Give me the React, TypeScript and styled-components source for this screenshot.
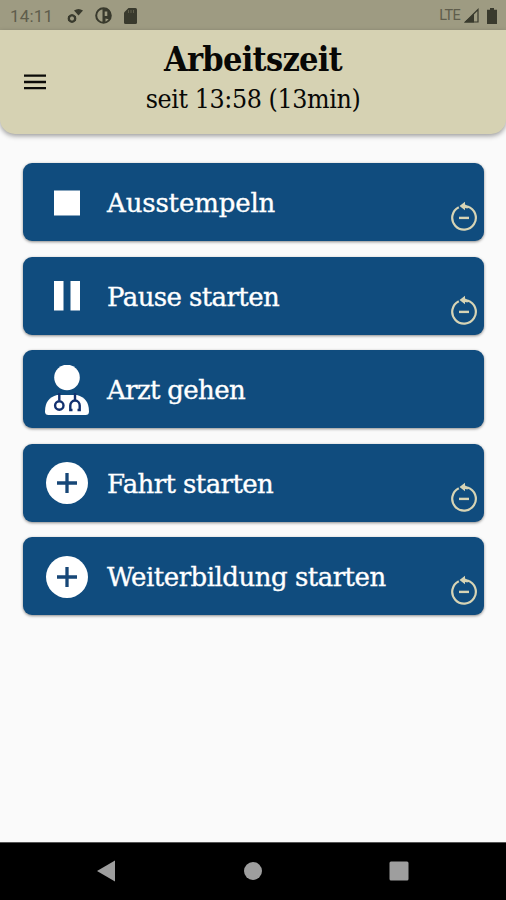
import React from "react";
import styled, { createGlobalStyle } from "styled-components";

const GlobalStyle = createGlobalStyle`
  * { box-sizing: border-box; }
  body { margin: 0; background: #fafafa; }
`;

const Screen = styled.div`
  display: flex;
  flex-direction: column;
  width: 506px;
  height: 900px;
  overflow: hidden;
  background: #fafafa;
`;

const StatusBar = styled.div`
  display: flex;
  align-items: center;
  justify-content: space-between;
  flex: none;
  height: 30px;
  padding: 1px 9px 0 10px;
  background: #9e9b82;
  color: #5f5d4c;
  font-family: Roboto, sans-serif;
`;

const StatusGroup = styled.div<{ $gap: number }>`
  display: flex;
  align-items: center;
  gap: ${(p) => p.$gap}px;
  svg { display: block; }
`;

const Clock = styled.span`
  width: 43px;
  margin-right: 2px;
  font-size: 17px;
  line-height: 20px;
  letter-spacing: 0.2px;
`;

const Network = styled.span`
  font-size: 14.5px;
  line-height: 20px;
  letter-spacing: -0.7px;
`;

const BatteryIcon = styled.svg`
  margin-left: 4px;
`;

const Header = styled.header`
  display: grid;
  grid-template-columns: 70px 1fr 70px;
  flex: none;
  height: 104px;
  border-radius: 0 0 15px 15px;
  background: #d6d2b3;
  box-shadow: 0 2px 5px rgba(0, 0, 0, 0.38);
`;

const MenuButton = styled.button`
  display: flex;
  align-items: center;
  justify-content: center;
  padding: 0;
  border: 0;
  background: none;
`;

const Heading = styled.div`
  display: flex;
  flex-direction: column;
  align-items: center;
  padding-top: 8px;
  color: #080806;
  font-family: "Roboto Slab", "DejaVu Serif Condensed", "DejaVu Serif", serif;
  white-space: nowrap;
`;

const Title = styled.h1`
  margin: 0;
  font-size: 34px;
  line-height: 42px;
  font-weight: 700;
  letter-spacing: -0.75px;
`;

const Subtitle = styled.div`
  font-size: 26.5px;
  line-height: 38px;
  letter-spacing: -0.4px;
`;

const Actions = styled.main`
  display: flex;
  flex: 1;
  flex-direction: column;
  gap: 15.5px;
  padding: 29px 22px 0 23px;
`;

const ActionButton = styled.button`
  display: grid;
  grid-template-columns: 88px 1fr 40px;
  align-items: center;
  flex: none;
  height: 78px;
  padding: 0;
  border: 0;
  border-radius: 9px;
  background: #104c7e;
  box-shadow: 0 1px 3px rgba(0, 0, 0, 0.45);
  color: #fff;
  text-align: left;
`;

const IconSlot = styled.span`
  display: flex;
  justify-content: center;
  padding-top: 1px;
`;

const Label = styled.span<{ $spacing: number }>`
  margin-left: -4px;
  padding-top: 2px;
  font-family: "Roboto Slab", "DejaVu Serif", serif;
  font-size: 26px;
  line-height: 36px;
  letter-spacing: ${(p) => p.$spacing}px;
  -webkit-text-stroke: 0.35px #fff;
  white-space: nowrap;
`;

const UndoSlot = styled.span`
  display: flex;
  align-self: end;
  justify-content: center;
  padding-bottom: 10px;
`;

const NavBar = styled.nav`
  display: grid;
  grid-template-columns: 33px 146px 147px 145px 35px;
  align-items: center;
  justify-items: center;
  flex: none;
  height: 58px;
  padding-bottom: 2px;
  border-top: 1px solid #555;
  background: #000;
  svg { display: block; }
  svg:first-child { grid-column-start: 2; }
`;

const StopIcon = () => (
  <svg width="44" height="50" viewBox="0 0 44 50" fill="#fff"><path d="M9 12.500h26v25H9z" /></svg>
);

const PauseIcon = () => (
  <svg width="44" height="50" viewBox="0 0 44 50" fill="#fff"><path d="M9 10h9.500v29.500H9zM25.500 10H35v29.500h-9.500z" /></svg>
);

const DoctorIcon = () => (
  <svg width="44" height="50" viewBox="0 0 44 50">
    <circle cx="22" cy="12.500" r="12.800" fill="#fff" />
    <path d="M12 30H32Q44 33 44 46.500Q44 50 40.500 50H3.500Q0 50 0 46.500Q0 33 12 30Z" fill="#fff" />
    <g fill="none" stroke="#12306f" strokeWidth="2.400">
      <path d="M14.300 28v7.500M30 28v7" />
      <circle cx="14.300" cy="40.500" r="4.200" />
      <path d="M27.500 45h-2.200v-4.500a4.700 5 0 0 1 9.400 0V45h-2.200" />
    </g>
  </svg>
);

const PlusIcon = () => (
  <svg width="44" height="44" viewBox="0 0 44 44">
    <circle cx="22" cy="22" r="21" fill="#fff" />
    <path d="M22 12v20M12 22h20" stroke="#174777" strokeWidth="3.300" />
  </svg>
);

const UndoIcon = () => (
  <svg width="28" height="30" viewBox="0 0 28 30">
    <g fill="none" stroke="#d7d4b5" strokeWidth="2.200">
      <path d="M8.800 6.200A11.800 11.800 0 1 0 17.500 5.500" />
      <path d="M9 16.900h10" strokeWidth="2.400" />
    </g>
    <path d="M9.500 5 15 .8V3.500L19 5.300 17.500 7.500 15 7V9.300Z" fill="#d7d4b5" />
  </svg>
);

const actions = [
  { label: "Ausstempeln", icon: <StopIcon />, spacing: -0.15, undo: true },
  { label: "Pause starten", icon: <PauseIcon />, spacing: -0.6, undo: true },
  { label: "Arzt gehen", icon: <DoctorIcon />, spacing: -0.65, undo: false },
  { label: "Fahrt starten", icon: <PlusIcon />, spacing: -0.6, undo: true },
  { label: "Weiterbildung starten", icon: <PlusIcon />, spacing: -0.5, undo: true },
];

export default function App() {
  return (
    <Screen>
      <GlobalStyle />
      <StatusBar>
        <StatusGroup $gap={12}>
          <Clock>14:11</Clock>
          <svg width="16" height="16" viewBox="0 0 16 16">
            <circle cx="5" cy="10.500" r="3.200" fill="none" stroke="#393a2d" strokeWidth="2.300" />
            <path d="M5 6v9M1 8.200l8 4.600M9 8.200l-8 4.600" stroke="#393a2d" strokeWidth="1" />
            <circle cx="5" cy="10.500" r="2" fill="#9e9b82" />
            <path d="M7 2.500Q11.500-.5 16 2.500L11.500 7.500Z" fill="#393a2d" />
          </svg>
          <svg width="17" height="17" viewBox="0 0 17 17">
            <circle cx="8.500" cy="8.500" r="7.300" fill="none" stroke="#393a2d" strokeWidth="2" />
            <path d="M7.500 1h3.500a7.500 7.500 0 0 1 3.500 11.500L10.500 11.500V15.500h-3Z" fill="#393a2d" />
            <path d="M9.700 4.500h2.600v4.500H9.700z" fill="#9e9b82" />
          </svg>
          <svg width="13" height="16" viewBox="0 0 13 16">
            <path d="M4.500 0H11.500Q13 0 13 1.500V14.500Q13 16 11.500 16H1.500Q0 16 0 14.500V4.500Z" fill="#393a2d" />
            <path d="M4.500 2v3M7 2v3M9.500 2v3" stroke="#605f4c" strokeWidth="1" />
          </svg>
        </StatusGroup>
        <StatusGroup $gap={4}>
          <Network>LTE</Network>
          <svg width="15" height="15" viewBox="0 0 15 15">
            <path d="M14 1.500V14H1.500Z" fill="none" stroke="#393a2d" strokeWidth="1.200" />
            <path d="M10 5.500V14.500H0Z" fill="#393a2d" />
          </svg>
          <BatteryIcon width="10" height="16" viewBox="0 0 10 16">
            <path d="M3 0h4v1.700h3V16H0V1.700h3Z" fill="#393a2d" />
          </BatteryIcon>
        </StatusGroup>
      </StatusBar>
      <Header>
        <MenuButton aria-label="Menü">
          <svg width="22" height="16" viewBox="0 0 22 16">
            <path d="M0 1.700h22M0 8h22M0 14.200h22" stroke="#0b0b08" strokeWidth="2.300" />
          </svg>
        </MenuButton>
        <Heading>
          <Title>Arbeitszeit</Title>
          <Subtitle>seit 13:58 (13min)</Subtitle>
        </Heading>
      </Header>
      <Actions>
        {actions.map((a) => (
          <ActionButton key={a.label}>
            <IconSlot>{a.icon}</IconSlot>
            <Label $spacing={a.spacing}>{a.label}</Label>
            {a.undo && <UndoSlot><UndoIcon /></UndoSlot>}
          </ActionButton>
        ))}
      </Actions>
      <NavBar>
        <svg width="18" height="22" viewBox="0 0 18 22"><path d="M0 11 18 .5v21Z" fill="#9e9e9e" /></svg>
        <svg width="18" height="18" viewBox="0 0 18 18"><circle cx="9" cy="9" r="9" fill="#9e9e9e" /></svg>
        <svg width="20" height="20" viewBox="0 0 20 20"><rect x=".5" y=".5" width="19" height="19" rx="1.500" fill="#9e9e9e" /></svg>
      </NavBar>
    </Screen>
  );
}
